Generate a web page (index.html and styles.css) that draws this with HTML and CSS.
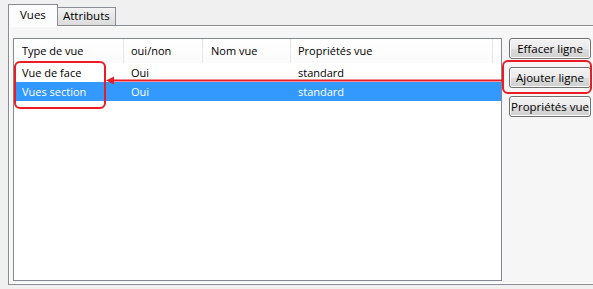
FILE: index.html
```html
<!DOCTYPE html>
<html lang="fr">
<head>
    <meta charset="UTF-8">
    <title>Vues</title>
    <link rel="stylesheet" href="styles.css">
</head>
<body>
    <div class="tabs">
        <div class="tab active">Vues</div>
        <div class="tab">Attributs</div>
    </div>

    <div class="panel">
        <div class="grid-box">
            <div class="row head">
                <div class="cell">Type de vue</div>
                <div class="cell">oui/non</div>
                <div class="cell">Nom vue</div>
                <div class="cell">Propriétés vue</div>
                <div class="cell filler"></div>
            </div>
            <div class="row">
                <div class="cell">Vue de face</div>
                <div class="cell">Oui</div>
                <div class="cell"></div>
                <div class="cell">standard</div>
                <div class="cell filler"></div>
            </div>
            <div class="row selected">
                <div class="cell">Vues section</div>
                <div class="cell">Oui</div>
                <div class="cell"></div>
                <div class="cell">standard</div>
                <div class="cell filler"></div>
            </div>
        </div>

        <div class="button-col">
            <button class="btn">Effacer ligne</button>
            <button class="btn">Ajouter ligne</button>
            <button class="btn">Propriétés vue</button>
        </div>
    </div>

    <!-- red annotations drawn over the screenshot -->
    <div class="mark mark-rows"></div>
    <div class="mark mark-btn"></div>
    <svg class="arrow" width="593" height="289" viewBox="0 0 593 289">
        <line x1="502" y1="80.5" x2="112" y2="80.5" stroke="#ec1c24" stroke-width="2"/>
        <polygon points="106,80.5 114,76.5 114,84.5" fill="#ec1c24"/>
    </svg>
</body>
</html>
```

FILE: styles.css
```css
body {
    margin: 0;
    background: #f0f0f0;
    font-family: "Segoe UI", "Open Sans", sans-serif;
    font-size: 11px;
    color: #000;
    width: 593px;
    height: 289px;
    overflow: hidden;
    position: relative;
}

/* Tabs */
.tabs {
    display: flex;
    align-items: flex-end;
    padding: 4px 0 0 8px;
    height: 21px;
}

.tab {
    box-sizing: border-box;
    height: 18px;
    padding: 0 5px;
    border: 1px solid #898c95;
    border-bottom: none;
    background: linear-gradient(#f2f2f2, #dcdcdc);
    line-height: 16px;
    font-size: 11.5px;
}

.tab + .tab {
    border-left: none;
}

.tab.active {
    width: 50px;
    height: 22px;
    padding-left: 11px;
    background: #fcfcfc;
    line-height: 20px;
    position: relative;
    margin-bottom: -1px;
    z-index: 1;
}

.panel {
    box-sizing: border-box;
    display: flex;
    align-items: flex-start;
    gap: 7px;
    margin-left: 8px;
    margin-right: -20px;
    height: 260px;
    padding: 12px 0 0 4px;
    border: 1px solid #898c95;
    background: #f6f6f6;
    box-shadow: inset 1px 1px 0 #fff, inset 0 -1px 0 #fff;
}

/* Table */
.grid-box {
    box-sizing: border-box;
    width: 489px;
    height: 243px;
    border: 1px solid #828790;
    background: #fff;
}

.row {
    display: grid;
    grid-template-columns: 110px 79px 88px 202px 1fr;
    height: 19px;
    line-height: 19px;
}

.row.head {
    height: 24px;
    line-height: 23px;
}

.cell {
    box-sizing: border-box;
    padding-left: 8px;
    white-space: nowrap;
}

.head .cell {
    border-right: 1px solid #e5e5e5;
    background: linear-gradient(#fff, #fbfbfc);
}

.row .cell:nth-child(2),
.row .cell:nth-child(4) {
    padding-left: 7px;
}

.head .filler {
    border-right: none;
}

.selected {
    background: #3399ff;
    color: #fff;
}

/* Buttons */
.button-col {
    display: flex;
    flex-direction: column;
    gap: 8px;
}

.btn {
    box-sizing: border-box;
    width: 82px;
    height: 21px;
    padding: 0;
    border: 1px solid #707070;
    border-radius: 3px;
    background: linear-gradient(#f2f2f2 0%, #ebebeb 50%, #dddddd 51%, #cfcfcf 100%);
    font-family: inherit;
    font-size: 11.5px;
    color: #000;
    box-shadow: inset 0 0 0 1px #fcfcfc;
}

/* Annotations */
.mark {
    position: absolute;
    box-sizing: border-box;
    border: 2px solid #ec1c24;
    border-radius: 6px;
}

.mark-rows {
    left: 14px;
    top: 61px;
    width: 92px;
    height: 48px;
}

.mark-btn {
    left: 502px;
    top: 60px;
    width: 90px;
    height: 34px;
}

.arrow {
    position: absolute;
    left: 0;
    top: 0;
}
```
